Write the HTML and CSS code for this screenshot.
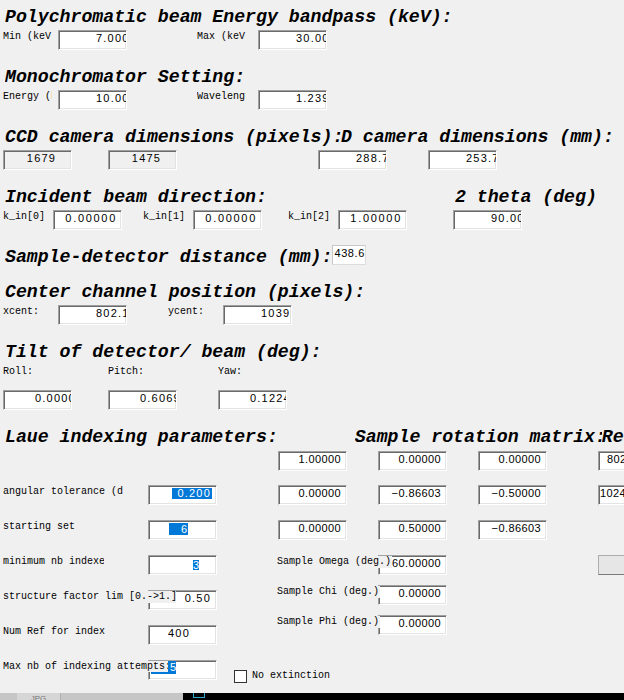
FILE: index.html
```html
<!DOCTYPE html>
<html>
<head>
<meta charset="utf-8">
<link rel="stylesheet" href="styles.css">
</head>
<body>
<div class="dlg">
  <div class="hdrow">
    <h2 class="hd">Polychromatic beam Energy bandpass (keV):</h2>
  </div>
  <div class="row mt3">
    <span class="lbl w49">Min (keV)</span>
    <div class="ed wd cl ml6">7.0000</div>
    <span class="lbl w49 ml70">Max (keV)</span>
    <div class="ed wd cl ml12">30.000</div>
  </div>

  <div class="hdrow mt17">
    <h2 class="hd">Monochromator Setting:</h2>
  </div>
  <div class="row mt3">
    <span class="lbl w49">Energy (keV)</span>
    <div class="ed wd cl ml6">10.000</div>
    <span class="lbl w49 ml70">Wavelength (A)</span>
    <div class="ed wd cl ml12">1.23984</div>
  </div>

  <div class="hdrow mt17">
    <h2 class="hd w336">CCD camera dimensions (pixels):</h2>
    <h2 class="hd">D camera dimensions (mm):</h2>
  </div>
  <div class="row mt3">
    <div class="ed ro wd">1679</div>
    <div class="ed ro wd ml36">1475</div>
    <div class="ed wd cl ml141">288.75</div>
    <div class="ed wd cl ml41">253.75</div>
  </div>

  <div class="hdrow mt17">
    <h2 class="hd">Incident beam direction:</h2>
    <h2 class="hd ml188">2 theta (deg)</h2>
  </div>
  <div class="row mt3">
    <span class="lbl w50">k_in[0]</span>
    <div class="ed wd2">0.00000</div>
    <span class="lbl w50 ml21">k_in[1]</span>
    <div class="ed wd2">0.00000</div>
    <span class="lbl w50 ml26">k_in[2]</span>
    <div class="ed wd2">1.00000</div>
    <div class="ed wd cl ml46">90.000</div>
  </div>

  <div class="hdrow mt15">
    <h2 class="hd mt2">Sample-detector distance (mm):</h2>
    <div class="ed thin">438.68</div>
  </div>

  <div class="hdrow mt15">
    <h2 class="hd">Center channel position (pixels):</h2>
  </div>
  <div class="row mt3">
    <span class="lbl w55">xcent:</span>
    <div class="ed wd cl">802.10</div>
    <span class="lbl w55 ml41">ycent:</span>
    <div class="ed wd cl">1039.5</div>
  </div>

  <div class="hdrow mt17">
    <h2 class="hd">Tilt of detector/ beam (deg):</h2>
  </div>
  <div class="row mt3">
    <span class="lbl w105">Roll:</span>
    <span class="lbl w110">Pitch:</span>
    <span class="lbl">Yaw:</span>
  </div>
  <div class="row mt12">
    <div class="ed wd cl31">0.00000</div>
    <div class="ed wd cl31 ml36">0.60690</div>
    <div class="ed wd cl31 ml41">0.12240</div>
  </div>

  <div class="hdrow mt17">
    <h2 class="hd">Laue indexing parameters:</h2>
    <h2 class="hd ml77 w247">Sample rotation matrix:</h2>
    <h2 class="hd">Reference</h2>
  </div>
  <div class="row mt4">
    <div class="ed mx ml275">1.00000</div>
    <div class="ed mx ml31">0.00000</div>
    <div class="ed mx ml31">0.00000</div>
    <div class="ed mx lp8 ml51">802</div>
  </div>
  <div class="row mt14">
    <span class="lbl w120">angular tolerance (deg)</span>
    <div class="ed wd ml25 pr4"><span class="sel s200">0.200</span></div>
    <div class="ed mx ml61">0.00000</div>
    <div class="ed mx ml31">−0.86603</div>
    <div class="ed mx ml31">−0.50000</div>
    <div class="ed mx lp1 ml51">1024</div>
  </div>
  <div class="row mt15">
    <span class="lbl w120">starting set</span>
    <div class="ed wd ml25 lp20"><span class="sel s6">6</span></div>
    <div class="ed mx ml61">0.00000</div>
    <div class="ed mx ml31">0.50000</div>
    <div class="ed mx ml31">−0.86603</div>
  </div>

  <div class="lower mt15">
    <div class="lcol">
      <div class="row">
        <span class="lbl w101">minimum nb indexed spots</span>
        <div class="ed wd ml44 lp44"><span class="sel s3">3</span></div>
      </div>
      <div class="row mt15">
        <span class="lbl w173 over">structure factor lim [0.-&gt;1.]</span>
        <div class="ed wd mln28 pr5">0.50</div>
      </div>
      <div class="row mt15">
        <span class="lbl w145">Num Ref for index</span>
        <div class="ed wd lp19">400</div>
      </div>
      <div class="row mt15">
        <span class="lbl w165 over short">Max nb of indexing attempts:</span>
        <div class="ed wd mln20 lp2"><span class="sel s5">5</span></div>
        <span class="chk ml17 mt10"></span>
        <span class="lbl ml5 mt10">No extinction</span>
      </div>
    </div>
    <div class="mcol">
      <div class="row np">
        <span class="lbl w115 over">Sample Omega (deg.)</span>
        <div class="ed mx mln14">60.00000</div>
      </div>
      <div class="row np mt10">
        <span class="lbl w103 over">Sample Chi (deg.)</span>
        <div class="ed mx mln2">0.00000</div>
      </div>
      <div class="row np mt10">
        <span class="lbl w103 over">Sample Phi (deg.)</span>
        <div class="ed mx mln2">0.00000</div>
      </div>
    </div>
    <div class="btn"></div>
  </div>
</div>
<div class="taskbar">
  <div class="tb-left"><span class="tb-tab">JPG</span></div>
  <div class="tb-right"><span class="tb-ico"></span></div>
</div>
</body>
</html>
```
FILE: styles.css
```css
html, body {
  margin: 0;
  padding: 0;
}
body {
  background: #f0f0f0;
  width: 624px;
  height: 700px;
  overflow: hidden;
  color: #000;
  font-family: "Liberation Mono", monospace;
}
.dlg {
  height: 693px;
  box-sizing: border-box;
  padding-top: 7px;
  overflow: hidden;
}
.hdrow {
  display: flex;
  align-items: flex-start;
  padding-left: 5px;
  white-space: nowrap;
}
.hd {
  margin: 0;
  flex: none;
  font-family: "Courier New", "Nimbus Mono PS", "FreeMono", "Liberation Mono", monospace;
  font-style: italic;
  font-weight: bold;
  font-size: 18.2px;
  line-height: 20px;
  height: 20px;
  white-space: nowrap;
  overflow: hidden;
}
.row {
  display: flex;
  align-items: flex-start;
  padding-left: 3px;
  white-space: nowrap;
}
.row.np { padding-left: 0; }
.lbl {
  flex: none;
  display: block;
  font-family: "Courier New", "Nimbus Mono PS", "FreeMono", "Liberation Mono", monospace;
  font-size: 10px;
  line-height: 12px;
  overflow: hidden;
  white-space: nowrap;
  margin-top: 1px;
}
.over {
  position: relative;
  z-index: 1;
  background: #f0f0f0;
}
.short { height: 11px; }

.ed {
  flex: none;
  width: 69px;
  height: 20px;
  box-sizing: border-box;
  border: 1px solid;
  border-color: #a0a0a0 #ffffff #ffffff #a0a0a0;
  box-shadow: inset 1px 1px 0 #696969, inset -1px -1px 0 #e3e3e3;
  background: #fff;
  font-family: "Liberation Sans", Arial, sans-serif;
  font-size: 11px;
  line-height: 13px;
  padding: 1px 5px 0 0;
  overflow: hidden;
  white-space: nowrap;
  text-align: right;
}
.wd { letter-spacing: 1.2px; }
.wd2 { letter-spacing: 1.7px; padding-right: 4px; }
.mx { letter-spacing: 0.4px; }
.cl { text-align: left; padding-left: 37px; padding-right: 0; }
.cl31 { text-align: left; padding-left: 31px; padding-right: 0; }
.ro { background: #f0f0f0; text-align: center; padding-left: 8px; padding-right: 0; }
.thin {
  width: 34px;
  border: 1px solid;
  border-color: #c8c8c8 #dcdcdc #dcdcdc #c8c8c8;
  box-shadow: none;
  text-align: left;
  padding-left: 1px;
  padding-right: 0;
  letter-spacing: 0.6px;
}
.lp1 { text-align: left; padding-left: 1px; }
.lp2 { text-align: left; padding-left: 2px; }
.lp8 { text-align: left; padding-left: 8px; }
.lp19 { text-align: left; padding-left: 19px; }
.lp20 { text-align: left; padding-left: 20px; }
.lp44 { text-align: left; padding-left: 44px; }
.pr4 { padding-right: 4px; }
.pr5 { padding-right: 5px; }

.sel {
  display: inline-block;
  vertical-align: top;
  background: #0078d7;
  color: #fff;
  line-height: 11px;
  margin-top: 1px;
}
.s200 { padding-left: 5px; padding-right: 1px; }
.s6 { line-height: 12px; padding-left: 12px; padding-right: 1px; letter-spacing: 0; }
.s3 { line-height: 10px; margin-top: 3px; letter-spacing: 0; }
.s5 { line-height: 13px; margin-top: -1px; width: 25px; text-align: right; letter-spacing: 0; }

.chk {
  flex: none;
  display: block;
  width: 13px;
  height: 13px;
  box-sizing: border-box;
  border: 1px solid #333;
  background: #fff;
}

.lower {
  display: flex;
  align-items: flex-start;
}
.lcol { width: 274px; flex: none; }
.mcol { width: 321px; flex: none; margin-left: 3px; }
.btn {
  flex: none;
  width: 26px;
  height: 20px;
  box-sizing: border-box;
  background: #e6e6e6;
  border: 1px solid #adadad;
  border-right: none;
  border-bottom-color: #7a7a7a;
}

.taskbar {
  display: flex;
  height: 7px;
  overflow: hidden;
}
.tb-left {
  width: 183px;
  background: #c6c6c6;
  display: flex;
}
.tb-tab {
  margin-left: 17px;
  width: 43px;
  background: #d6d6d6;
  font-family: "Liberation Sans", sans-serif;
  font-size: 8px;
  line-height: 12px;
  color: #777;
  text-align: center;
  border-right: 1px solid #b0b0b0;
}
.tb-right {
  flex: 1;
  background: #000;
}
.tb-ico {
  display: block;
  margin-left: 10px;
  width: 10px;
  height: 4px;
  border: 1px solid #2aa6c8;
  border-top: none;
}

.mt2 { margin-top: 2px; }
.mt3 { margin-top: 3px; }
.mt4 { margin-top: 4px; }
.mt10 { margin-top: 10px; }
.mt12 { margin-top: 12px; }
.mt14 { margin-top: 14px; }
.mt15 { margin-top: 15px; }
.mt17 { margin-top: 17px; }

.ml5 { margin-left: 5px; }
.ml6 { margin-left: 6px; }
.ml12 { margin-left: 12px; }
.ml17 { margin-left: 17px; }
.ml21 { margin-left: 21px; }
.ml25 { margin-left: 25px; }
.ml26 { margin-left: 26px; }
.ml31 { margin-left: 31px; }
.ml36 { margin-left: 36px; }
.ml41 { margin-left: 41px; }
.ml44 { margin-left: 44px; }
.ml46 { margin-left: 46px; }
.ml51 { margin-left: 51px; }
.ml61 { margin-left: 61px; }
.ml70 { margin-left: 70px; }
.ml77 { margin-left: 77px; }
.ml141 { margin-left: 141px; }
.ml188 { margin-left: 188px; }
.ml275 { margin-left: 275px; }
.mln2 { margin-left: -2px; }
.mln14 { margin-left: -14px; }
.mln20 { margin-left: -20px; }
.mln28 { margin-left: -28px; }

.w49 { width: 49px; }
.w50 { width: 50px; }
.w55 { width: 55px; }
.w101 { width: 101px; }
.w103 { width: 103px; }
.w105 { width: 105px; }
.w110 { width: 110px; }
.w115 { width: 115px; }
.w120 { width: 120px; }
.w145 { width: 145px; }
.w165 { width: 165px; }
.w173 { width: 173px; }
.w247 { width: 247px; }
.w336 { width: 336px; }
```
